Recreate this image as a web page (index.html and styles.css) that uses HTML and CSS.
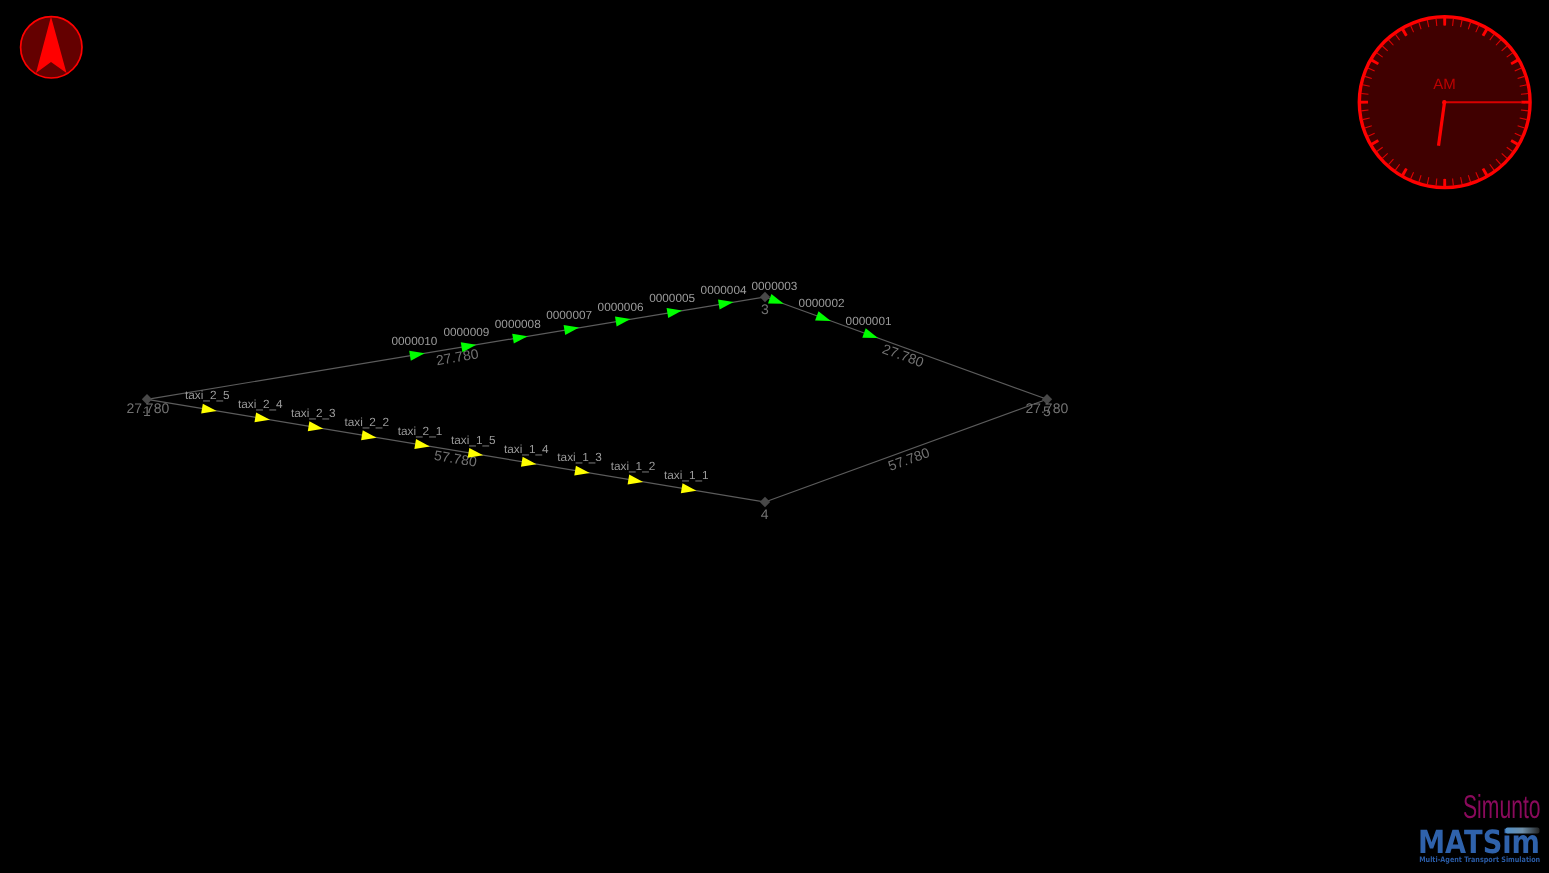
FILE: index.html
```html
<!DOCTYPE html>
<html lang="en">
<head>
    <meta charset="UTF-8">
    <meta name="viewport" content="width=device-width, initial-scale=1.0">
    <title>OTFVis</title>
    <link rel="stylesheet" href="styles.css">
</head>
<body>
    <svg class="scene" width="1549" height="873" viewBox="0 0 1549 873">
        <defs>
            <polygon id="veh" points="0,-5 14.9,0 0,5"/>
            <linearGradient id="swoosh" x1="0" x2="1" y1="0" y2="0">
                <stop offset="0" stop-color="#4f8fc8"/>
                <stop offset="0.5" stop-color="#6d8ea8"/>
                <stop offset="1" stop-color="#222"/>
            </linearGradient>
        </defs>

        <!-- compass -->
        <circle class="compass-face" cx="51.3" cy="47.3" r="30.7"/>
        <polygon class="compass-needle" points="51,16.5 66.5,73 51,62 36,73"/>

        <!-- clock -->
        <circle class="clock-face" cx="1444.7" cy="102.2" r="85.4"/>
        <circle class="clock-minutes" cx="1444.7" cy="102.2" r="80.3" pathLength="60"/>
        <circle class="clock-hours" cx="1444.7" cy="102.2" r="81.2" pathLength="12"/>
        <text class="clock-am" x="1444.5" y="89">AM</text>
        <line class="hand-minute" x1="1444.3" y1="102.3" x2="1522" y2="102.3"/>
        <line class="hand-hour" x1="1444.5" y1="102.3" x2="1438.5" y2="145.8"/>
        <circle class="hand-pin" cx="1444.3" cy="102.3" r="2.2"/>

        <!-- links -->
        <line class="link" x1="147" y1="399.3" x2="765" y2="297"/>
        <line class="link" x1="765" y1="297" x2="1047" y2="399.3"/>
        <line class="link" x1="1047" y1="399.3" x2="765" y2="502"/>
        <line class="link" x1="765" y1="502" x2="147" y2="399.3"/>

        <!-- nodes -->
        <polygon class="node" points="147,394.1 152.2,399.3 147,404.5 141.8,399.3"/>
        <polygon class="node" points="765,291.8 770.2,297 765,302.2 759.8,297"/>
        <polygon class="node" points="1047,394.1 1052.2,399.3 1047,404.5 1041.8,399.3"/>
        <polygon class="node" points="765,496.8 770.2,502 765,507.2 759.8,502"/>

        <g class="labels">
            <text class="link-label start" x="126.4" y="413.3">27.780</text>
            <text class="link-label start" x="1025.4" y="412.8">27.780</text>
            <text class="link-label" transform="translate(458 361.7) rotate(-9.4)">27.780</text>
            <text class="link-label" transform="translate(901.5 360) rotate(19.9)">27.780</text>
            <text class="link-label" transform="translate(910.5 463.7) rotate(-19.9)">57.780</text>
            <text class="link-label" transform="translate(454.7 463.3) rotate(9.46)">57.780</text>

            <text class="node-label" x="147" y="416">1</text>
            <text class="node-label" x="765" y="314.3">3</text>
            <text class="node-label" x="1047" y="416">5</text>
            <text class="node-label" x="764.6" y="519">4</text>
        </g>

        <!-- vehicles -->
        <use class="veh-green" href="#veh" transform="translate(410 355.7) rotate(-9.4)"/>
        <use class="veh-green" href="#veh" transform="translate(461.6 347.2) rotate(-9.4)"/>
        <use class="veh-green" href="#veh" transform="translate(513 338.6) rotate(-9.4)"/>
        <use class="veh-green" href="#veh" transform="translate(564.4 330) rotate(-9.4)"/>
        <use class="veh-green" href="#veh" transform="translate(615.8 321.5) rotate(-9.4)"/>
        <use class="veh-green" href="#veh" transform="translate(667.4 313) rotate(-9.4)"/>
        <use class="veh-green" href="#veh" transform="translate(718.8 304.5) rotate(-9.4)"/>
        <use class="veh-green" href="#veh" transform="translate(769.7 298.7) rotate(19.9)"/>
        <use class="veh-green" href="#veh" transform="translate(816.8 315.9) rotate(19.9)"/>
        <use class="veh-green" href="#veh" transform="translate(864 333) rotate(19.9)"/>

        <use class="veh-yellow" href="#veh" transform="translate(202 408.6) rotate(9.46)"/>
        <use class="veh-yellow" href="#veh" transform="translate(255.3 417.4) rotate(9.46)"/>
        <use class="veh-yellow" href="#veh" transform="translate(308.6 426.3) rotate(9.46)"/>
        <use class="veh-yellow" href="#veh" transform="translate(361.9 435.2) rotate(9.46)"/>
        <use class="veh-yellow" href="#veh" transform="translate(415.2 444) rotate(9.46)"/>
        <use class="veh-yellow" href="#veh" transform="translate(468.5 452.9) rotate(9.46)"/>
        <use class="veh-yellow" href="#veh" transform="translate(521.8 461.8) rotate(9.46)"/>
        <use class="veh-yellow" href="#veh" transform="translate(575.1 470.6) rotate(9.46)"/>
        <use class="veh-yellow" href="#veh" transform="translate(628.4 479.5) rotate(9.46)"/>
        <use class="veh-yellow" href="#veh" transform="translate(681.7 488.2) rotate(9.46)"/>

        <g class="labels">
            <text class="veh-label" x="391.5" y="345">0000010</text>
            <text class="veh-label" x="443.4" y="336.3">0000009</text>
            <text class="veh-label" x="494.8" y="327.8">0000008</text>
            <text class="veh-label" x="546.2" y="319.2">0000007</text>
            <text class="veh-label" x="597.6" y="310.8">0000006</text>
            <text class="veh-label" x="649.2" y="302.2">0000005</text>
            <text class="veh-label" x="700.6" y="293.8">0000004</text>
            <text class="veh-label" x="751.5" y="290">0000003</text>
            <text class="veh-label" x="798.6" y="307">0000002</text>
            <text class="veh-label" x="845.6" y="325">0000001</text>

            <text class="veh-label" x="185" y="399">taxi_2_5</text>
            <text class="veh-label" x="238" y="408">taxi_2_4</text>
            <text class="veh-label" x="291" y="417">taxi_2_3</text>
            <text class="veh-label" x="344.4" y="426">taxi_2_2</text>
            <text class="veh-label" x="397.7" y="435">taxi_2_1</text>
            <text class="veh-label" x="451" y="444">taxi_1_5</text>
            <text class="veh-label" x="504" y="452.6">taxi_1_4</text>
            <text class="veh-label" x="557.3" y="461.4">taxi_1_3</text>
            <text class="veh-label" x="610.7" y="470.2">taxi_1_2</text>
            <text class="veh-label" x="664" y="479">taxi_1_1</text>
        </g>

        <!-- logos -->
        <g class="logos">
            <text class="logo-simunto" x="1463" y="817.7" textLength="77.5" lengthAdjust="spacingAndGlyphs">Simunto</text>
            <text class="logo-matsim" x="1418" y="852.7" textLength="122" lengthAdjust="spacingAndGlyphs">MATSim</text>
            <rect x="1505.5" y="827.5" width="34" height="6" rx="2" fill="url(#swoosh)"/>
            <text class="logo-tagline" x="1419.2" y="862.4" textLength="121" lengthAdjust="spacingAndGlyphs">Multi-Agent Transport Simulation</text>
        </g>
    </svg>
</body>
</html>
```

FILE: styles.css
```css
html, body {
    margin: 0;
    background-color: #000;
    overflow: hidden;
}

.scene {
    display: block;
    font-family: "Liberation Sans", Arial, sans-serif;
    text-rendering: geometricPrecision;
}

/* keeps the text greyscale, the reference has no coloured fringes */
.labels {
    opacity: 0.99;
}

.compass-face {
    fill: #640000;
    stroke: #f00;
    stroke-width: 1.7;
}

.compass-needle {
    fill: #f00;
}

.clock-face {
    fill: #400000;
    stroke: #f00;
    stroke-width: 3.4;
}

.clock-minutes {
    fill: none;
    stroke: #e00000;
    stroke-width: 7.3;
    stroke-dasharray: 0.13 0.87;
    stroke-dashoffset: 0.065;
}

.clock-hours {
    fill: none;
    stroke: #f00;
    stroke-width: 9;
    stroke-dasharray: 0.07 0.93;
    stroke-dashoffset: 0.035;
}

.clock-am {
    fill: #c00000;
    font-size: 15px;
    text-anchor: middle;
    opacity: 0.99;
}

.hand-minute {
    stroke: #d80000;
    stroke-width: 2;
}

.hand-hour {
    stroke: #f00;
    stroke-width: 3.2;
}

.hand-pin {
    fill: #f00;
}

.link {
    stroke: #5c5c5c;
    stroke-width: 1.2;
}

.node {
    fill: #484848;
}

.link-label,
.node-label {
    fill: #747474;
    font-size: 14px;
    text-anchor: middle;
}

.link-label.start {
    text-anchor: start;
}

.veh-green {
    fill: #0f0;
}

.veh-yellow {
    fill: #ff0;
}

.veh-label {
    fill: #9c9c9c;
    font-size: 11.8px;
}

.logos {
    filter: blur(0.3px);
}

.logo-simunto {
    fill: #8a0a5c;
    font-size: 33px;
}

.logo-matsim {
    fill: #2f62ab;
    font-family: "DejaVu Sans", sans-serif;
    font-size: 32px;
    font-weight: bold;
}

.logo-tagline {
    fill: #2a5ba5;
    font-family: "DejaVu Sans", sans-serif;
    font-size: 7.5px;
    font-weight: bold;
}
```
